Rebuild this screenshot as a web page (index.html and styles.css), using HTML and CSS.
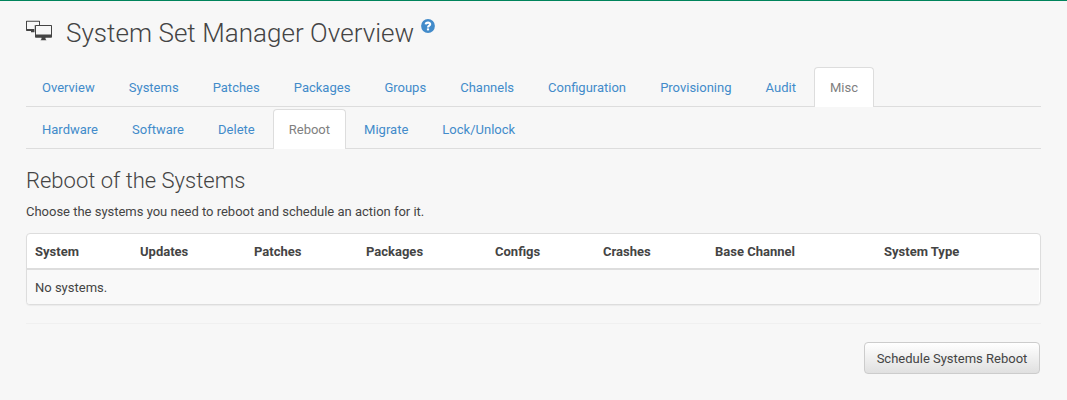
FILE: index.html
```html
<!DOCTYPE html>
<html lang="en">
<head>
<meta charset="utf-8">
<title>System Set Manager Overview</title>
<link rel="stylesheet" href="styles.css">
</head>
<body>
<main class="content">
  <h1 class="page-title">
    <svg class="title-icon" width="26" height="21" viewBox="0 0 26 21" aria-hidden="true">
      <path class="ink" d="M.6 .7H13.400Q14 .7 14 1.300V5H8.500V12.300H5V11H.8Q0 11 0 10.200V1.300Q0 .7 .6 .7Z"/>
      <path class="screen" d="M1 1.800H13V5H8.500V9H1Z"/>
      <path class="ink" d="M9.800 5H25.200Q26 5 26 5.800V16.800Q26 17.800 25.200 17.800H19.500V19L20.500 20.200H14.500L15.500 19V17.800H9.800Q9 17.800 9 16.800V5.800Q9 5 9.800 5Z"/>
      <path class="screen" d="M10 6H25V14.500H10Z"/>
    </svg>
    <span>System Set Manager Overview</span>
    <svg class="help-icon" width="14" height="14" viewBox="0 0 14 14" aria-label="Help">
      <circle class="help-disc" cx="7" cy="7" r="6.900"/>
      <path class="help-mark" d="M4.700 5.400C4.900 3.100 9.400 3.100 9.200 5.300C9.100 6.800 7 6.700 7 8.600"/>
      <path class="help-dot" d="M5.900 9.400H8.100V11.400H5.900Z"/>
    </svg>
  </h1>
  <nav class="tabs">
    <a class="tab">Overview</a><a class="tab">Systems</a><a class="tab">Patches</a><a class="tab">Packages</a><a class="tab">Groups</a><a class="tab">Channels</a><a class="tab">Configuration</a><a class="tab">Provisioning</a><a class="tab">Audit</a><a class="tab active">Misc</a>
  </nav>
  <nav class="tabs subtabs">
    <a class="tab">Hardware</a><a class="tab">Software</a><a class="tab">Delete</a><a class="tab active">Reboot</a><a class="tab">Migrate</a><a class="tab">Lock/Unlock</a>
  </nav>
  <h2 class="section-title">Reboot of the Systems</h2>
  <p class="intro">Choose the systems you need to reboot and schedule an action for it.</p>
  <div class="panel">
    <table class="systems">
      <colgroup><col class="c1"><col class="c2"><col class="c3"><col class="c4"><col class="c5"><col class="c6"><col class="c7"><col></colgroup>
      <thead><tr><th>System</th><th>Updates</th><th>Patches</th><th>Packages</th><th>Configs</th><th>Crashes</th><th>Base Channel</th><th>System Type</th></tr></thead>
      <tbody><tr><td colspan="8">No systems.</td></tr></tbody>
    </table>
  </div>
  <hr class="rule">
  <div class="actions"><button class="btn">Schedule Systems Reboot</button></div>
</main>
</body>
</html>
```
FILE: styles.css
```css
* { box-sizing: border-box; }
body {
  margin: 0;
  height: 400px;
  overflow: hidden;
  border-top: 1px solid #00845c;
  background: #f7f7f7;
  color: #444;
  font: 13px/18px Roboto, sans-serif;
}
.content { padding: 16px 26px 0; }
.page-title {
  display: flex;
  height: 32px;
  margin: 0 0 18px;
  font-size: 26px;
  font-weight: 300;
  line-height: 32px;
  letter-spacing: .04px;
  white-space: nowrap;
}
.title-icon { margin: 3px 14px 0 0; }
.help-icon { margin: 2px 0 0 7px; }
.ink { fill: #444; }
.screen { fill: #f7f7f7; }
.help-disc { fill: #428bca; }
.help-mark { fill: none; stroke: #fff; stroke-width: 2.1; }
.help-dot { fill: #fff; }
.tabs {
  display: flex;
  width: 1015px;
  height: 40px;
  gap: 2.07px;
  border-bottom: 1px solid #ddd;
}
.subtabs { margin-top: 2px; }
.tab {
  height: 40px;
  padding: 11px 15px 10px;
  border: 1px solid transparent;
  border-bottom: 0;
  border-radius: 4px 4px 0 0;
  color: #428bca;
}
.active { border-color: #ddd; background: #fff; color: #808080; }
.section-title {
  margin: 18px 0 0;
  font-size: 22px;
  font-weight: 300;
  line-height: 28px;
}
.intro { margin: 8px 0 12px; letter-spacing: -.01px; }
.panel {
  width: 1015px;
  height: 72px;
  padding-right: 1px;
  border: 1px solid #ddd;
  border-radius: 4px;
  background: #fff;
  box-shadow: 0 1px 1px rgba(0, 0, 0, .05);
  overflow: hidden;
}
.systems { width: 100%; table-layout: fixed; border-collapse: separate; border-spacing: 0; }
.systems th, .systems td { padding: 2px 8px 0; text-align: left; }
.systems th { height: 36px; border-bottom: 2px solid #ddd; font-weight: 700; }
.systems td { height: 34px; background: #f9f9f9; }
.c1 { width: 105px; }
.c2 { width: 114px; }
.c3 { width: 112px; }
.c4 { width: 129px; }
.c5 { width: 108px; }
.c6 { width: 112px; }
.c7 { width: 169px; }
.rule { width: 1015px; height: 1px; margin: 18px 0; border: 0; background: #f0f0f0; }
.actions { display: flex; justify-content: flex-end; padding-right: 1px; }
.btn {
  width: 176px;
  height: 32px;
  padding: 2px 0 0;
  border: 1px solid #ccc;
  border-radius: 4px;
  background: linear-gradient(#fff, #e0e0e0);
  color: #444;
  font: 13px/18px Roboto, sans-serif;
  white-space: nowrap;
}
```
